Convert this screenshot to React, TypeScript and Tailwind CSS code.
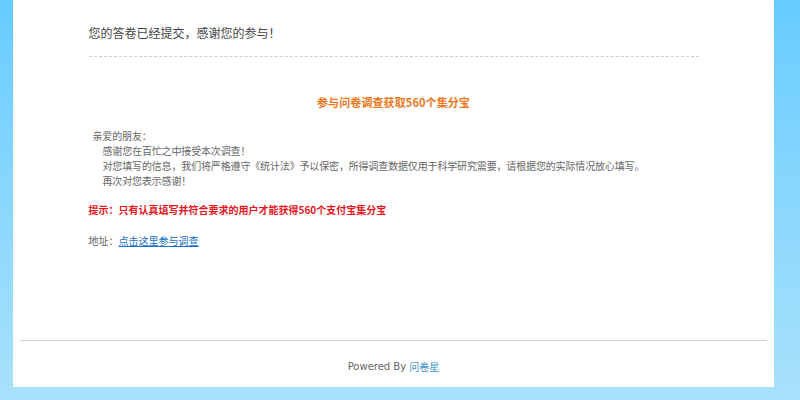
export default function App() {
  const cjk = { fontFamily: '"Microsoft YaHei", "Noto Sans CJK SC", "Noto Sans", sans-serif' };
  return (
    <div className="w-[800px] h-[400px] overflow-hidden bg-gradient-to-b from-[#66ccff] to-[#a9e1fb]" style={cjk}>
      <div className="ml-[13px] w-[761px] h-[387px] bg-white flex flex-col">
        <div className="mx-auto w-[610px] flex flex-col">
          <div className="pt-[24px] text-[12px] leading-[18px] text-[#444]">您的答卷已经提交，感谢您的参与！</div>
          <div className="mt-[14px] border-t border-dashed border-[#cfcfcf]" />
          <div className="mt-[36px] text-center text-[11px] leading-[18px] font-bold text-[#ec7620] tracking-[0.1px]">参与问卷调查获取560个集分宝</div>
          <div className="mt-[17px] text-[10px] leading-[15px] text-[#666] tracking-[-0.15px]">
            <div className="pl-[4px]">亲爱的朋友：</div>
            <div className="pl-[14px]">感谢您在百忙之中接受本次调查！</div>
            <div className="pl-[14px]">对您填写的信息，我们将严格遵守《统计法》予以保密，所得调查数据仅用于科学研究需要，请根据您的实际情况放心填写。</div>
            <div className="pl-[14px]">再次对您表示感谢！</div>
          </div>
          <div className="mt-[14px] text-[10px] leading-[15px] font-bold text-[#e8141c]">提示：只有认真填写并符合要求的用户才能获得560个支付宝集分宝</div>
          <div className="mt-[16px] text-[10px] leading-[15px] text-[#666]">
            地址：<a href="#" className="text-[#1a6fc7] underline">点击这里参与调查</a>
          </div>
        </div>
        <div className="mt-auto mx-[7px] border-t border-[#d4d4d4]" />
        <div className="h-[46px] pt-[4px] flex items-center justify-center text-[10px] text-[#666]">
          <span style={{ fontFamily: '"DejaVu Sans", sans-serif' }}>Powered By&nbsp;</span>
          <a href="#" className="text-[#3a8fc7]">问卷星</a>
        </div>
      </div>
    </div>
  );
}
